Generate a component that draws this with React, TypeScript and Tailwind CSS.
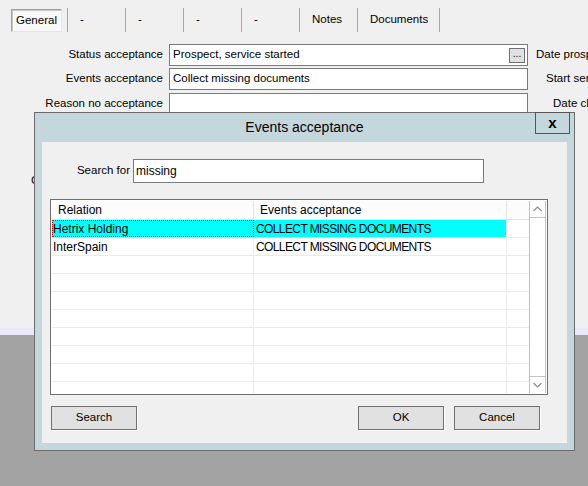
import React from 'react';

const tabs = [
  { label: '-', w: 'w-[58px]' },
  { label: '-', w: 'w-[58px]' },
  { label: '-', w: 'w-[58px]' },
  { label: '-', w: 'w-[58px]' },
  { label: 'Notes', w: 'w-[58px]' },
  { label: 'Documents', w: 'w-[82px]' },
];

const rows = [
  { relation: 'Hetrix Holding', event: 'COLLECT MISSING DOCUMENTS', selected: true },
  { relation: 'InterSpain', event: 'COLLECT MISSING DOCUMENTS', selected: false },
  { relation: '', event: '' },
  { relation: '', event: '' },
  { relation: '', event: '' },
  { relation: '', event: '' },
  { relation: '', event: '' },
  { relation: '', event: '' },
  { relation: '', event: '' },
  { relation: '', event: '' },
];

// ── Background form row ───────────────────────────────────────────────────────
function FormRow({ label, value, side, sideGap, browse, className }: {
  label: string;
  value: string;
  side: string;
  sideGap: string;
  browse?: boolean;
  className?: string;
}) {
  return (
    <div className={`flex items-center h-[22px] whitespace-nowrap ${className ?? ''}`}>
      <div className="w-[163px] text-right shrink-0">{label}</div>
      <div className="ml-[6px] w-[359px] h-[22px] shrink-0 border border-[#7a7a7a] bg-white flex items-center pl-[3px]">
        <span className="flex-1">{value}</span>
        {browse && (
          <span className="w-[16px] h-[15px] mr-[2px] border border-[#707070] bg-[#e1e1e1] flex items-center justify-center text-[10px] leading-none pb-[3px]">
            ...
          </span>
        )}
      </div>
      <div className={`${sideGap} shrink-0`}>{side}</div>
    </div>
  );
}

function Button({ children }: { children: React.ReactNode }) {
  return (
    <button className="w-[86px] h-[24px] border border-[#707070] bg-[#e1e1e1] flex items-center justify-center shadow-[1px_1px_0_#ffffff]">
      {children}
    </button>
  );
}

export default function App() {
  return (
    <div className="relative w-[588px] h-[486px] overflow-hidden bg-[#a3a3a3] font-['Liberation_Sans',Arial,sans-serif] text-[11.5px] text-black">
      {/* Background form */}
      <div className="h-[328px] bg-[#f0f0f0] flex flex-col overflow-hidden">
        <div className="flex h-[24px] mt-[8px] ml-[11px]">
          <div className="mt-px w-[51px] h-[23px] border border-t-[#a0a0a0] border-l-[#a0a0a0] border-r-[#e6e6e6] border-b-[#e6e6e6] bg-[#f8f8f8] shadow-[inset_1px_1px_0_#c8c8c8] flex items-center justify-center">
            General
          </div>
          <div className="w-[6px] border-r border-[#a8a8a8]" />
          {tabs.map((t, i) => (
            <div key={i} className={`${t.w} border-r border-[#a8a8a8] flex items-center pl-[12px]`}>
              {t.label}
            </div>
          ))}
        </div>

        <FormRow className="mt-[12px]" label="Status acceptance" value="Prospect, service started" side="Date prospect" sideGap="ml-[8px]" browse />
        <FormRow className="mt-[2px]" label="Events acceptance" value="Collect missing documents" side="Start service" sideGap="ml-[18px]" />
        <FormRow className="mt-[3px]" label="Reason no acceptance" value="" side="Date closed" sideGap="ml-[25px]" />
        <div className="mt-[57px] pl-[31px]">Comments</div>
      </div>
      <div className="h-[7px] bg-[#e8ebf7]" />

      {/* Dialog */}
      <div className="absolute left-[34px] top-[112px] w-[541px] h-[339px] border border-[#6b6b6b] bg-[#c4d7dd] flex flex-col px-[7px] pb-[7px]">
        <div className="h-[29px] shrink-0 flex items-center justify-center text-[14px]">Events acceptance</div>
        <div className="absolute top-[-1px] right-[4px] w-[35px] h-[22px] border border-[#555555] flex items-center justify-center text-[15px] font-bold leading-none pb-[2px]">
          x
        </div>

        <div className="flex-1 bg-[#f0f0f0] flex flex-col">
          <div className="mt-[17px] flex items-center">
            <div className="w-[88px] text-right">Search for</div>
            <div className="ml-[3px] w-[351px] h-[24px] border border-[#7a7a7a] bg-white flex items-center pl-[2px] text-[12px]">
              missing
            </div>
          </div>

          {/* Grid */}
          <div className="mt-[16px] ml-[8px] w-[498px] h-[196px] border border-[#6e6e6e] bg-white p-px flex text-[12px]">
            <div className="w-[477px] flex flex-col overflow-hidden">
              <div className="h-[19px] shrink-0 flex border-b border-[#e3e3e3] bg-[#fcfcfc]">
                <div className="w-[202px] border-r border-[#e3e3e3] pl-[6px] flex items-center">Relation</div>
                <div className="w-[253px] border-r border-[#e3e3e3] pl-[6px] flex items-center">Events acceptance</div>
                <div className="flex-1" />
              </div>
              {rows.map((r, i) => (
                <div key={i} className="h-[18px] shrink-0 flex border-b border-[#ebebeb]">
                  <div
                    className={`w-[202px] flex items-center border-r border-[#ebebeb] pl-px ${
                      r.selected ? 'bg-[#00ffff] outline outline-1 outline-dotted outline-[#ff0000] -outline-offset-1' : ''
                    }`}
                  >
                    {r.relation}
                  </div>
                  <div className={`w-[253px] flex items-center border-r border-[#ebebeb] pl-[2px] tracking-[-0.6px] ${r.selected ? 'bg-[#00ffff]' : ''}`}>
                    {r.event}
                  </div>
                  <div className="flex-1" />
                </div>
              ))}
            </div>

            {/* Scrollbar */}
            <div className="w-[17px] border-x border-[#c2c2c2] flex flex-col justify-between">
              <div className="h-[17px] border-b border-[#c2c2c2] flex items-center justify-center">
                <svg width="9" height="6" viewBox="0 0 9 6">
                  <polyline points="0.5,5 4.5,1 8.5,5" fill="none" stroke="#8c8c8c" strokeWidth="1.2" />
                </svg>
              </div>
              <div className="h-[17px] border-t border-[#c2c2c2] flex items-center justify-center">
                <svg width="9" height="6" viewBox="0 0 9 6">
                  <polyline points="0.5,1 4.5,5 8.5,1" fill="none" stroke="#8c8c8c" strokeWidth="1.2" />
                </svg>
              </div>
            </div>
          </div>

          <div className="mt-[11px] ml-[9px] w-[489px] flex justify-between">
            <Button>Search</Button>
            <div className="flex gap-[10px]">
              <Button>OK</Button>
              <Button>Cancel</Button>
            </div>
          </div>
        </div>
      </div>
    </div>
  );
}
